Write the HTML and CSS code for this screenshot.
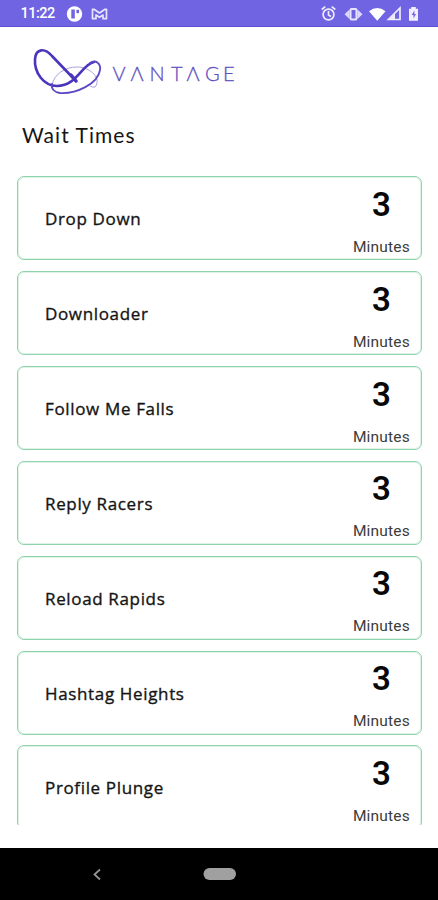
FILE: index.html
```html
<!DOCTYPE html>
<html lang="en">
<head>
<meta charset="utf-8">
<title>Wait Times</title>
<link rel="stylesheet" href="styles.css">
</head>
<body>
<div class="screen">
  <header class="status">
    <span class="clock">11:22</span>
    <svg class="notifications" width="44" height="18" viewBox="0 0 44 18">
      <circle cx="8.5" cy="9" r="7.7" fill="#fff"/>
      <path d="M5.300 4.500h3.500v9H5.300z" fill="#7064e3"/>
      <path d="M10.400 4.800h2.600v3.400h-2.600z" fill="#7064e3"/>
      <path d="M26.500 4.300h1.500L33.500 8l5.500-3.700h1.500v9.400h-3.500V10l-3.500 2.300L30 10v3.700h-3.500z" fill="none" stroke="#e8e4ff" stroke-width="1.700" stroke-linejoin="round"/>
    </svg>
    <svg class="system" width="102" height="18" viewBox="0 0 102 18">
      <g fill="none" stroke="#eeebff" stroke-width="1.700">
        <circle cx="10.500" cy="9.500" r="5.400"/>
        <path d="M10.500 6v4l2.500 1.400M3.700 4.500l3.600-2.800M17.300 4.500l-3.600-2.800"/>
      </g>
      <path d="M31.500 4.500v9.500L26.500 9.300zM39.500 4.500v9.500l5-4.700z" fill="#dcd7ff"/>
      <rect x="32.500" y="4" width="6" height="10.500" rx="1" fill="#7064e3" stroke="#e8e4ff" stroke-width="2"/>
      <path d="M51 6.200Q59.200-.3 67.500 6.200L59.200 15.800z" fill="#fff"/>
      <path d="M70.300 14.500L82 3v11.500z" fill="none" stroke="#eeebff" stroke-width="1.700"/>
      <path d="M77 8.600v6h-6z" fill="#eeebff"/>
      <path d="M93.200 2h4.600v1.700h2.200v12h-9v-12h2.200z" fill="#f1eeff"/>
      <path d="M96.400 5.500L93.700 10h1.800v3.500L98 9h-1.600z" fill="#7064e3"/>
    </svg>
  </header>
  <svg class="brand" width="220" height="60" viewBox="24 40 220 60" role="img" aria-label="VANTAGE">
    <g fill="none" stroke-linecap="round">
      <path d="M52 85C54 74 65 67 77 67C91 67 102 79 95 87Q93 88 90 86" stroke="#aaa2dc" stroke-width="1"/>
      <path d="M76 81L52 56C45 48 36 48 35 59C34 73 44 86 57 86C77 86 82 64 94 62" stroke="#4c35bd" stroke-width="2.600"/>
      <path d="M76 81L71 75" stroke="#4c35bd" stroke-width="3.500"/>
      <path d="M90 63C96 59 101 64 100 70C98 84 76 94 60 93C54 92 51 89 52 84" stroke="#5c48c4" stroke-width="1.800"/>
    </g>
    <text class="wordmark" y="81" x="112.500 130.500 149.500 171 186.500 205 223">VΛNTΛGE</text>
  </svg>
  <h1 class="title">Wait Times</h1>
  <main class="rides">
    <article class="ride"><h2>Drop Down</h2><div class="wait"><b>3</b><span>Minutes</span></div></article>
    <article class="ride"><h2>Downloader</h2><div class="wait"><b>3</b><span>Minutes</span></div></article>
    <article class="ride"><h2>Follow Me Falls</h2><div class="wait"><b>3</b><span>Minutes</span></div></article>
    <article class="ride"><h2>Reply Racers</h2><div class="wait"><b>3</b><span>Minutes</span></div></article>
    <article class="ride"><h2>Reload Rapids</h2><div class="wait"><b>3</b><span>Minutes</span></div></article>
    <article class="ride"><h2>Hashtag Heights</h2><div class="wait"><b>3</b><span>Minutes</span></div></article>
    <article class="ride"><h2>Profile Plunge</h2><div class="wait"><b>3</b><span>Minutes</span></div></article>
  </main>
  <footer class="navbar">
    <svg width="438" height="52" viewBox="0 0 438 52">
      <path d="M100 21.500L94.500 26.500l5.500 5" fill="none" stroke="#929292" stroke-width="1.800"/>
      <rect x="203.500" y="20" width="32.500" height="12" rx="6" fill="#a0a0a0"/>
    </svg>
  </footer>
</div>
</body>
</html>
```
FILE: styles.css
```css
* {
  box-sizing: border-box;
}

body {
  margin: 0;
  background: #fff;
}

.screen {
  display: flex;
  flex-direction: column;
  width: 438px;
  height: 900px;
  overflow: hidden;
  color: #151515;
}

.status {
  display: flex;
  align-items: center;
  height: 27px;
  flex: none;
  padding: 1px 18px 0 20.500px;
  background: #7064e3;
  border-bottom: 1px solid #5c50cf;
}

.clock {
  width: 45.500px;
  font: 500 14.500px/18px Roboto, sans-serif;
  letter-spacing: -.5px;
  color: #fff;
}

.system {
  margin-left: auto;
}

.brand {
  display: block;
  flex: none;
  margin: 13px 0 0 24px;
}

.wordmark {
  font: 300 20px Lato, sans-serif;
  fill: #6250c0;
  stroke: #6250c0;
  stroke-width: .3px;
}

.title {
  flex: none;
  height: 28px;
  margin: 21px 0 0 22px;
  font: 400 21px/28px Lato, sans-serif;
  letter-spacing: 1.050px;
}

.rides {
  display: flex;
  flex-direction: column;
  gap: 10.850px;
  height: 648.500px;
  flex: none;
  margin-top: 27.400px;
  padding: 0 16.500px;
  overflow: hidden;
}

.ride {
  display: flex;
  flex: none;
  justify-content: space-between;
  height: 84px;
  padding: 0 10.500px 0 27.500px;
  border: 1px solid #8ed3ac;
  box-shadow: inset 0 0 0 1px #dff3e7;
  border-radius: 7px;
}

.ride h2 {
  margin: 0;
  font: 400 17px/83px "Open Sans", sans-serif;
  letter-spacing: .650px;
  -webkit-text-stroke: .350px #151515;
}

.wait {
  display: flex;
  flex-direction: column;
  align-items: center;
}

.wait b {
  font: 600 33px/39px Roboto, sans-serif;
  margin-top: 7.500px;
  color: #080808;
}

.wait span {
  margin-top: 13px;
  font: 400 15.500px/20px Roboto, sans-serif;
  letter-spacing: .2px;
  color: #3c3c3c;
}

.navbar {
  flex: none;
  height: 52px;
  margin-top: auto;
  background: #000;
}

.navbar svg {
  display: block;
}
```
